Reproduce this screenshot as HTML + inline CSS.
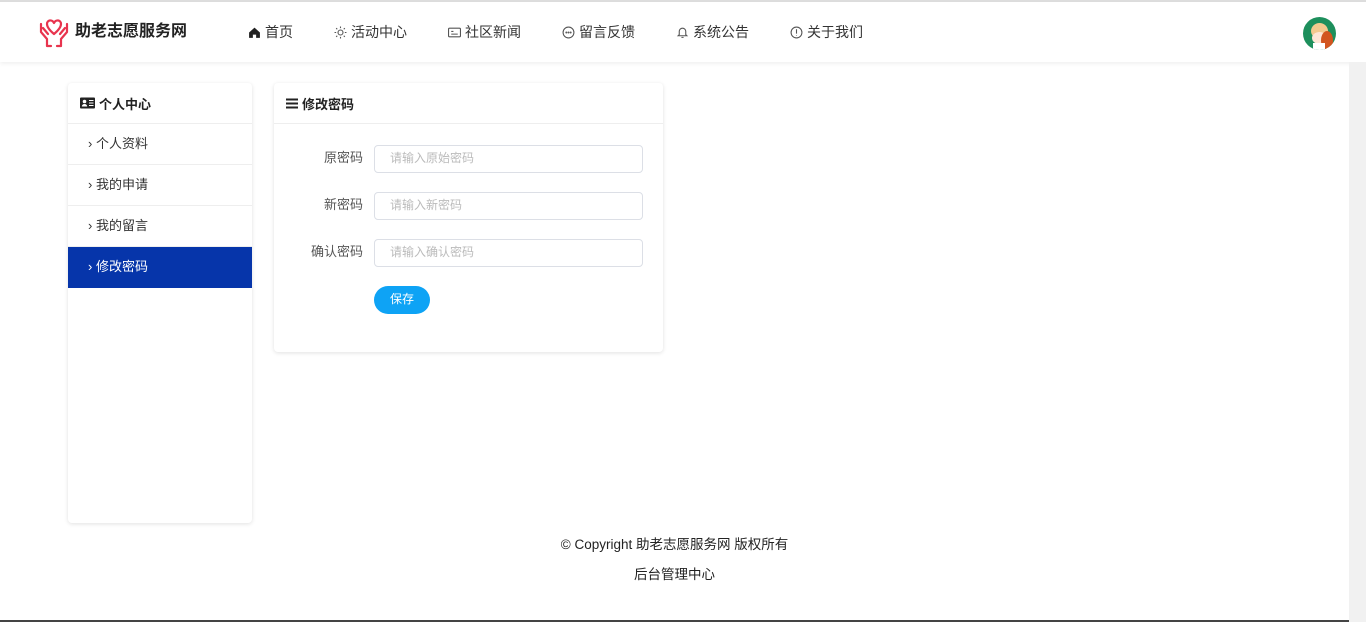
<!DOCTYPE html>
<html><head><meta charset="utf-8"><style>
*{margin:0;padding:0;box-sizing:border-box}
body{width:1366px;height:622px;overflow:hidden;background:#fff;font-family:"Liberation Sans","Noto Sans CJK SC",sans-serif;font-size:14px;color:#333;position:relative}
.top{position:absolute;left:0;top:0;width:1366px;height:2px;background:#ddd}
.hdr{position:absolute;left:0;top:2px;width:1366px;height:60px;background:#fff;box-shadow:0 2px 4px rgba(0,0,0,.06)}
.logo{position:absolute;left:38px;top:14px}
.brand{position:absolute;left:75px;top:18px;font-size:16px;font-weight:bold;color:#222;line-height:24px}
.nav{position:absolute;top:19px;font-size:14px;line-height:22px;color:#333;display:flex;align-items:center;gap:4px}
.nav svg{width:13px;height:13px}
.av{position:absolute;left:1303px;top:15px;width:33px;height:33px;border-radius:50%;background:#1d8f5c;overflow:hidden}
.sb{position:absolute;left:1349px;top:62px;width:17px;height:560px;background:#f1f1f1}
.bot{position:absolute;left:0;top:620px;width:1349px;height:2px;background:#444}
.card{position:absolute;background:#fff;border-radius:4px;box-shadow:0 1px 4px rgba(0,0,0,.12)}
.ch{height:41px;border-bottom:1px solid #eee;font-weight:bold;font-size:13px;color:#222;padding-left:12px;display:flex;align-items:center;gap:4px}
.mi{height:41px;line-height:40px;border-bottom:1px solid #eee;font-size:13px;padding-left:20px;color:#333}
.mi.on{background:#0635aa;color:#fff;border:none}
.row{position:absolute;left:0;width:390px;height:28px}
.lab{position:absolute;right:301px;top:0;line-height:26px;font-size:13px;color:#555}
.inp{position:absolute;left:100px;top:0;width:269px;height:28px;border:1px solid #dcdfe6;border-radius:4px;font-size:12px;color:#bbb;padding-left:15px;line-height:24px}
.btn{position:absolute;left:100px;top:203px;width:56px;height:28px;border-radius:14px;background:#0ea3f5;color:#fff;font-size:12px;text-align:center;line-height:27px}
.ft{position:absolute;width:1349px;text-align:center;font-size:13.5px;color:#222;line-height:18px}
</style></head><body>
<div class="top"></div>
<div class="hdr">
<svg class="logo" width="32" height="32" viewBox="0 0 32 32" fill="none" stroke="#e8344e" stroke-width="2.2" stroke-linejoin="round" stroke-linecap="round"><path d="M16 18 C10 13 9 10 9 8 C9 4 14 3 16 7 C18 3 23 4 23 8 C23 10 22 13 16 18Z"/><path d="M3 8 L3 16 L9 23 L9 30 M5 12 L10 18 M29 8 L29 16 L23 23 L23 30 M27 12 L22 18 M9 30 h4 M19 30 h4"/></svg>
<div class="brand">助老志愿服务网</div>
<div class="nav" style="left:248px"><svg viewBox="0 0 12 12"><path d="M1 6 L6 1.5 L11 6 V11 H7.5 V8 H4.5 V11 H1Z" fill="#222"/></svg>首页</div>
<div class="nav" style="left:334px"><svg viewBox="0 0 12 12" fill="none" stroke="#555"><circle cx="6" cy="6" r="2.3"/><path d="M6 0.5v1.5M6 10v1.5M0.5 6h1.5M10 6h1.5M2 2l1 1M9 9l1 1M10 2l-1 1M3 9l-1 1"/></svg>活动中心</div>
<div class="nav" style="left:448px"><svg viewBox="0 0 12 12" fill="none" stroke="#555"><rect x="0.5" y="2" width="11" height="8" rx="1"/><path d="M3 5h2M3 7.5h6"/></svg>社区新闻</div>
<div class="nav" style="left:562px"><svg viewBox="0 0 12 12" fill="none" stroke="#555"><circle cx="6" cy="6" r="5"/><circle cx="4" cy="6" r=".4"/><circle cx="6" cy="6" r=".4"/><circle cx="8" cy="6" r=".4"/></svg>留言反馈</div>
<div class="nav" style="left:676px"><svg viewBox="0 0 12 12" fill="none" stroke="#555"><path d="M3 8V5a3 3 0 0 1 6 0v3l1 1H2Z M5 10.5h2"/></svg>系统公告</div>
<div class="nav" style="left:790px"><svg viewBox="0 0 12 12" fill="none" stroke="#555"><circle cx="6" cy="6" r="5"/><path d="M6 3v4M6 8.5v.5"/></svg>关于我们</div>
<div class="av"><div style="position:absolute;left:8px;top:6px;width:17px;height:16px;border-radius:50%;background:#f3c98e"></div><div style="position:absolute;left:9px;top:15px;width:15px;height:12px;border-radius:50%;background:#fde6d6"></div><div style="position:absolute;left:18px;top:14px;width:12px;height:19px;background:#d2551f;border-radius:50%"></div><div style="position:absolute;left:10px;top:26px;width:12px;height:8px;background:#fff"></div></div>
</div>
<div class="sb"></div>
<div class="bot"></div>

<div class="card" style="left:68px;top:83px;width:184px;height:440px">
<div class="ch"><svg width="15" height="12" viewBox="0 0 15 12"><rect x="0" y="0.5" width="15" height="11" rx="1" fill="#222"/><circle cx="4.5" cy="4.5" r="1.8" fill="#fff"/><path d="M1.8 9.5 a2.7 2.5 0 0 1 5.4 0Z" fill="#fff"/><path d="M9 3.5h4.5M9 6h4.5M9 8.5h4.5" stroke="#fff"/></svg>个人中心</div>
<div class="mi">› 个人资料</div>
<div class="mi">› 我的申请</div>
<div class="mi">› 我的留言</div>
<div class="mi on">› 修改密码</div>
</div>

<div class="card" style="left:274px;top:83px;width:389px;height:269px">
<div class="ch"><svg width="12" height="11" viewBox="0 0 12 11"><path d="M0 1.5h12M0 5.5h12M0 9.5h12" stroke="#222" stroke-width="2"/></svg>修改密码</div>
<div class="row" style="top:62px"><div class="lab">原密码</div><div class="inp">请输入原始密码</div></div>
<div class="row" style="top:109px"><div class="lab">新密码</div><div class="inp">请输入新密码</div></div>
<div class="row" style="top:156px"><div class="lab">确认密码</div><div class="inp">请输入确认密码</div></div>
<div class="btn">保存</div>
</div>

<div class="ft" style="top:536px">© Copyright 助老志愿服务网 版权所有</div>
<div class="ft" style="top:566px">后台管理中心</div>
</body></html>
